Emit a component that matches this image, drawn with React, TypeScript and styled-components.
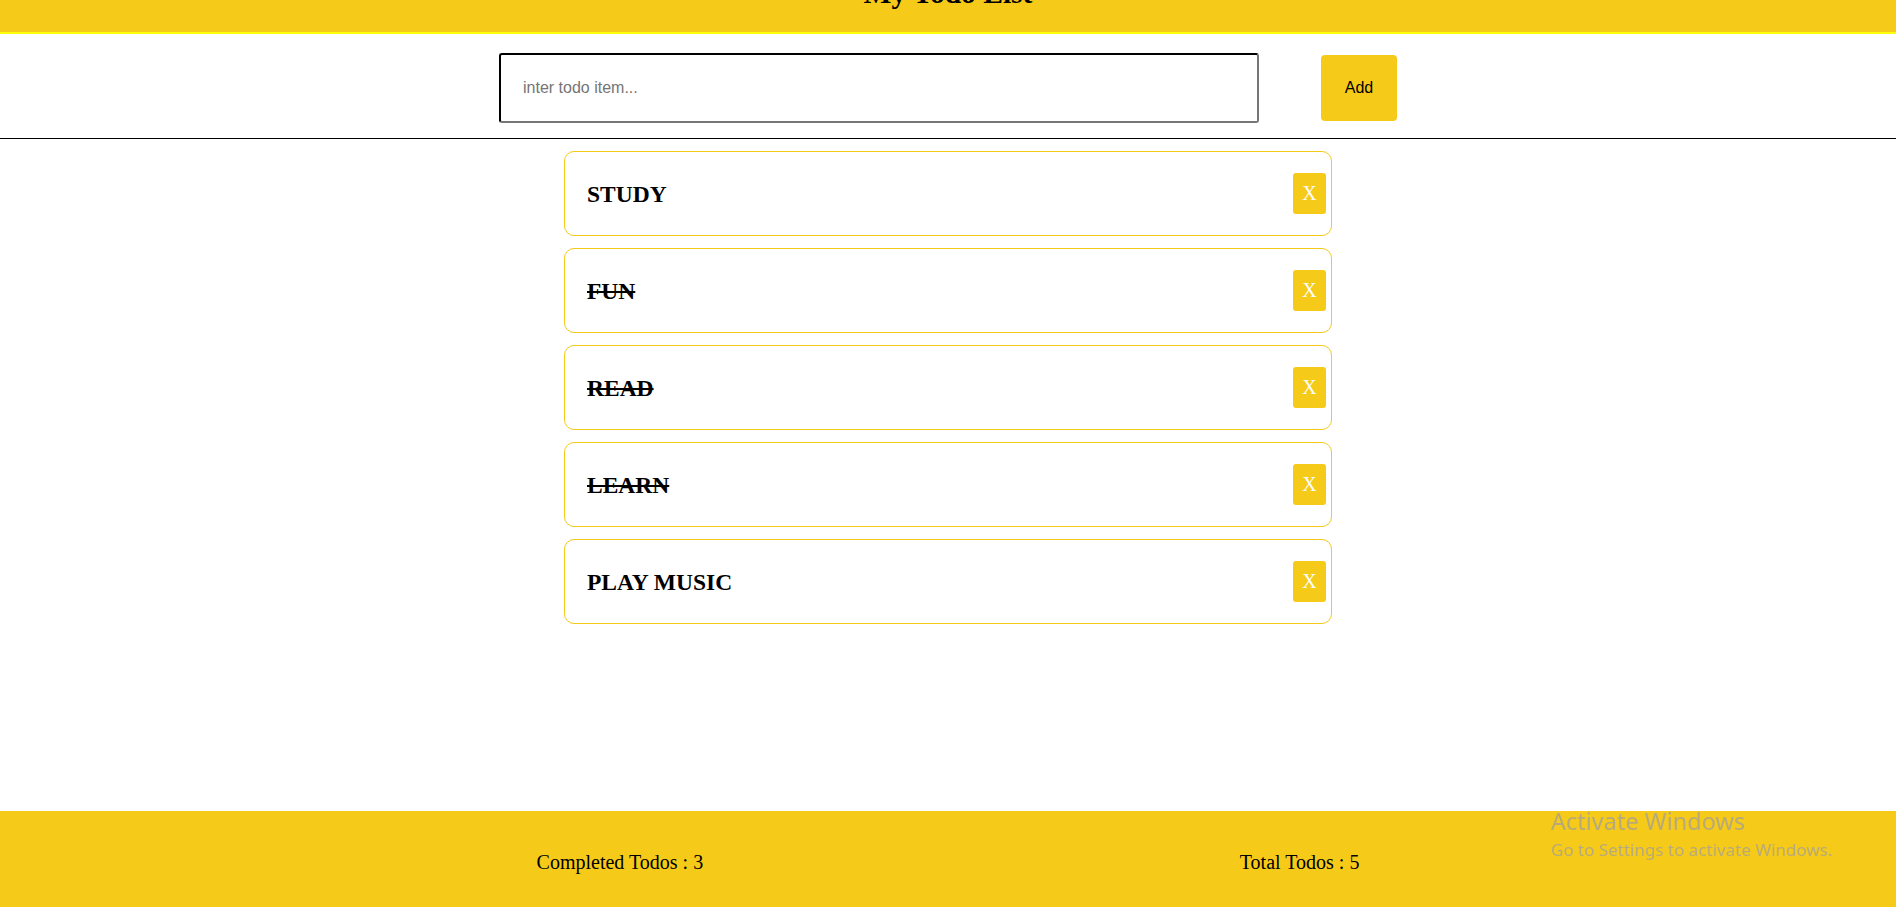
import React, { useState } from "react";
import styled, { createGlobalStyle } from "styled-components";

const GlobalStyle = createGlobalStyle`
  html, body {
    margin: 0;
    padding: 0;
    background: #ffffff;
    font-family: "Liberation Serif", "Times New Roman", serif;
    overflow: hidden;
  }
  * { box-sizing: border-box; }
`;

const YELLOW = "#f6ca18";

const Page = styled.div`
  display: flex;
  flex-direction: column;
  height: 907px;
`;

const Header = styled.header`
  height: 34px;
  background: ${YELLOW};
  border-bottom: 2px solid #ffff0a;
  overflow: hidden;
  display: flex;
  justify-content: center;
`;

const Title = styled.h1`
  margin: -23px 0 0;
  font-size: 29.5px;
  font-weight: bold;
  line-height: normal;
  color: #000;
`;

const Form = styled.form`
  display: flex;
  justify-content: center;
  align-items: center;
  gap: 62px;
  padding: 19px 0 15px;
  border-bottom: 1px solid #000;
`;

const Input = styled.input`
  width: 760px;
  height: 70px;
  border: 2px inset #767676;
  border-top-color: #222;
  border-left-color: #222;
  border-radius: 3px;
  padding: 0 22px;
  font-family: "Liberation Sans", Arial, sans-serif;
  font-size: 16px;
  outline: none;
  &::placeholder {
    color: #757575;
  }
`;

const AddButton = styled.button`
  width: 76px;
  height: 66px;
  border: none;
  border-radius: 4px;
  background: ${YELLOW};
  color: #000;
  font-family: "Liberation Sans", Arial, sans-serif;
  font-size: 16px;
  cursor: pointer;
`;

const List = styled.ul`
  list-style: none;
  margin: 0;
  padding: 12px 0 0;
  display: flex;
  flex-direction: column;
  align-items: center;
  gap: 12px;
  flex: 1;
`;

const Card = styled.li`
  width: 768px;
  height: 85px;
  border: 1px solid ${YELLOW};
  border-radius: 10px;
  display: flex;
  align-items: center;
  justify-content: space-between;
  padding: 0 5px 0 22px;
`;

const ItemText = styled.h2<{ $done: boolean }>`
  margin: 0;
  padding-top: 2px;
  font-size: 23.5px;
  font-weight: bold;
  line-height: normal;
  color: #000;
  cursor: pointer;
  text-decoration: ${(p) => (p.$done ? "line-through" : "none")};
`;

const RemoveButton = styled.button`
  width: 33px;
  height: 41px;
  border: none;
  border-radius: 3px;
  background: ${YELLOW};
  color: #fff;
  font-family: "Liberation Serif", "Times New Roman", serif;
  font-size: 20px;
  padding: 0;
  cursor: pointer;
`;

const Footer = styled.footer`
  height: 96px;
  flex-shrink: 0;
  background: ${YELLOW};
  display: flex;
  justify-content: space-evenly;
  align-items: center;
  padding-top: 6px;
`;

const Stat = styled.span`
  font-size: 20px;
  color: #000;
`;

const Watermark = styled.div`
  position: fixed;
  left: 1551px;
  top: 806px;
  font-family: "Noto Sans", "Open Sans", sans-serif;
  color: #b8aa78;
  pointer-events: none;
  display: flex;
  flex-direction: column;
`;

const WatermarkTitle = styled.span`
  font-size: 23.5px;
  line-height: 30px;
`;

const WatermarkSub = styled.span`
  font-size: 17px;
  line-height: 22px;
  margin-top: 3px;
`;

type Todo = { id: number; text: string; done: boolean };

export default function App() {
  const [todos, setTodos] = useState<Todo[]>([
    { id: 1, text: "STUDY", done: false },
    { id: 2, text: "FUN", done: true },
    { id: 3, text: "READ", done: true },
    { id: 4, text: "LEARN", done: true },
    { id: 5, text: "PLAY MUSIC", done: false },
  ]);
  const [value, setValue] = useState("");

  const add = (e: React.FormEvent) => {
    e.preventDefault();
    if (!value.trim()) return;
    setTodos((t) => [...t, { id: Date.now(), text: value.toUpperCase(), done: false }]);
    setValue("");
  };

  const completed = todos.filter((t) => t.done).length;

  return (
    <>
      <GlobalStyle />
      <Page>
        <Header>
          <Title>My Todo List</Title>
        </Header>
        <Form onSubmit={add}>
          <Input
            placeholder="inter todo item..."
            value={value}
            onChange={(e) => setValue(e.target.value)}
          />
          <AddButton type="submit">Add</AddButton>
        </Form>
        <List>
          {todos.map((t) => (
            <Card key={t.id}>
              <ItemText
                $done={t.done}
                onClick={() =>
                  setTodos((all) => all.map((x) => (x.id === t.id ? { ...x, done: !x.done } : x)))
                }
              >
                {t.text}
              </ItemText>
              <RemoveButton
                type="button"
                onClick={() => setTodos((all) => all.filter((x) => x.id !== t.id))}
              >
                X
              </RemoveButton>
            </Card>
          ))}
        </List>
        <Footer>
          <Stat>Completed Todos : {completed}</Stat>
          <Stat>Total Todos : {todos.length}</Stat>
        </Footer>
      </Page>
      <Watermark>
        <WatermarkTitle>Activate Windows</WatermarkTitle>
        <WatermarkSub>Go to Settings to activate Windows.</WatermarkSub>
      </Watermark>
    </>
  );
}
